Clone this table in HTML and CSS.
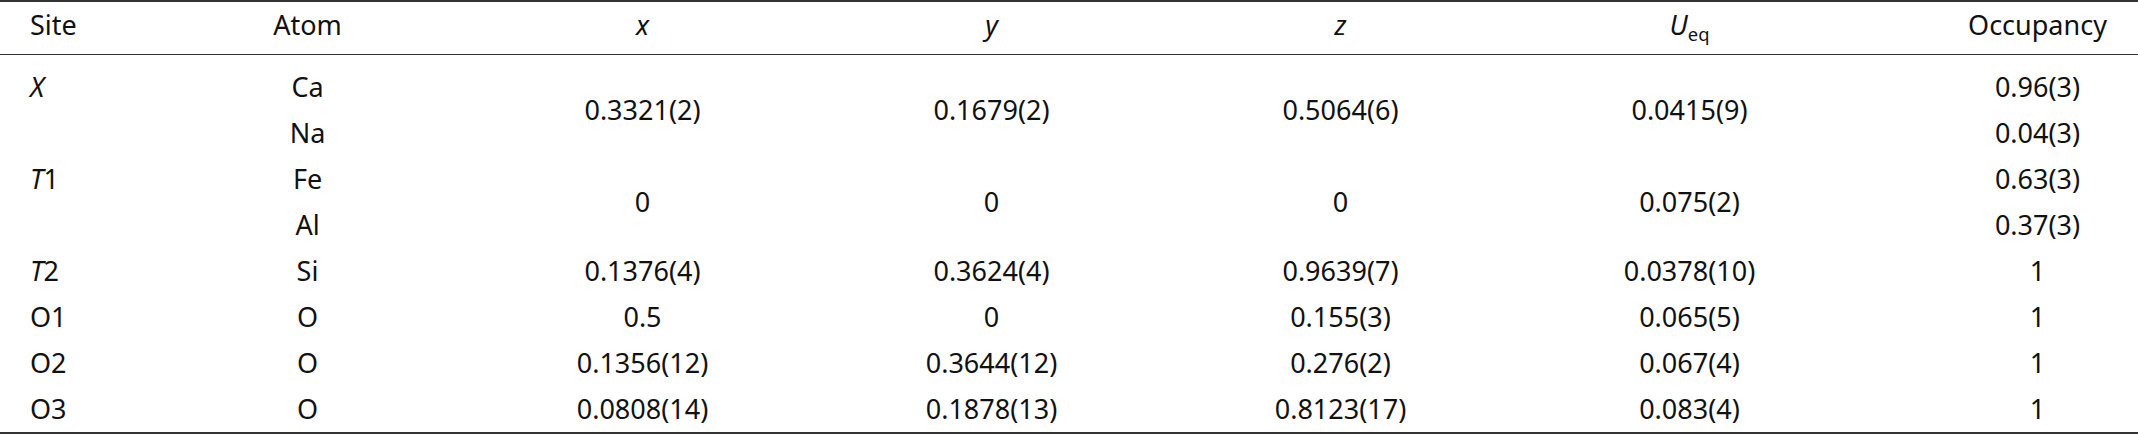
FILE: index.html
```html
<!DOCTYPE html>
<html lang="en">
<head>
    <meta charset="UTF-8">
    <title>Site occupancy</title>
    <link rel="stylesheet" href="styles.css">
</head>
<body>
    <table class="atoms">
        <colgroup>
            <col class="c-site">
            <col class="c-atom">
            <col class="c-num">
            <col class="c-num">
            <col class="c-num">
            <col class="c-num">
            <col class="c-occ">
        </colgroup>
        <thead>
            <tr>
                <th class="site">Site</th>
                <th>Atom</th>
                <th><i>x</i></th>
                <th><i>y</i></th>
                <th><i>z</i></th>
                <th><i>U</i><sub>eq</sub></th>
                <th class="occ">Occupancy</th>
            </tr>
        </thead>
        <tbody>
            <tr class="first">
                <td class="site"><i>X</i></td>
                <td>Ca</td>
                <td rowspan="2">0.3321(2)</td>
                <td rowspan="2">0.1679(2)</td>
                <td rowspan="2">0.5064(6)</td>
                <td rowspan="2">0.0415(9)</td>
                <td class="occ">0.96(3)</td>
            </tr>
            <tr>
                <td class="site"></td>
                <td>Na</td>
                <td class="occ">0.04(3)</td>
            </tr>
            <tr>
                <td class="site"><i>T</i>1</td>
                <td>Fe</td>
                <td rowspan="2">0</td>
                <td rowspan="2">0</td>
                <td rowspan="2">0</td>
                <td rowspan="2">0.075(2)</td>
                <td class="occ">0.63(3)</td>
            </tr>
            <tr>
                <td class="site"></td>
                <td>Al</td>
                <td class="occ">0.37(3)</td>
            </tr>
            <tr>
                <td class="site"><i>T</i>2</td>
                <td>Si</td>
                <td>0.1376(4)</td>
                <td>0.3624(4)</td>
                <td>0.9639(7)</td>
                <td>0.0378(10)</td>
                <td class="occ">1</td>
            </tr>
            <tr>
                <td class="site">O1</td>
                <td>O</td>
                <td>0.5</td>
                <td>0</td>
                <td>0.155(3)</td>
                <td>0.065(5)</td>
                <td class="occ">1</td>
            </tr>
            <tr>
                <td class="site">O2</td>
                <td>O</td>
                <td>0.1356(12)</td>
                <td>0.3644(12)</td>
                <td>0.276(2)</td>
                <td>0.067(4)</td>
                <td class="occ">1</td>
            </tr>
            <tr>
                <td class="site">O3</td>
                <td>O</td>
                <td>0.0808(14)</td>
                <td>0.1878(13)</td>
                <td>0.8123(17)</td>
                <td>0.083(4)</td>
                <td class="occ">1</td>
            </tr>
        </tbody>
    </table>
</body>
</html>
```

FILE: styles.css
```css
html, body {
    margin: 0;
    padding: 0;
    background-color: #ffffff;
    font-family: "Noto Sans", "Liberation Sans", sans-serif;
    color: #111;
}

.atoms {
    width: 100%;
    border-collapse: collapse;
    table-layout: fixed;
    font-size: 27px;
    border-top: 2px solid #333;
    border-bottom: 2px solid #333;
}

.c-site { width: 147px; }
.c-atom { width: 321px; }
.c-num  { width: 349px; }
.c-occ  { width: 274px; }

.atoms th,
.atoms td {
    text-align: center;
    font-weight: normal;
    line-height: 30px;
    padding: 8px 0;
    white-space: nowrap;
}

.atoms th {
    padding: 8px 0 14px;
    border-bottom: 1px solid #333;
}

.atoms .site {
    text-align: left;
    padding-left: 30px;
}

/* values sit centred under the header word */
.atoms .occ {
    padding-left: 100px;
    padding-right: 27px;
}

.atoms tr.first td {
    padding-top: 17px;
}

.atoms sub {
    font-size: 0.68em;
    line-height: 0;
    vertical-align: -0.3em;
}
```
